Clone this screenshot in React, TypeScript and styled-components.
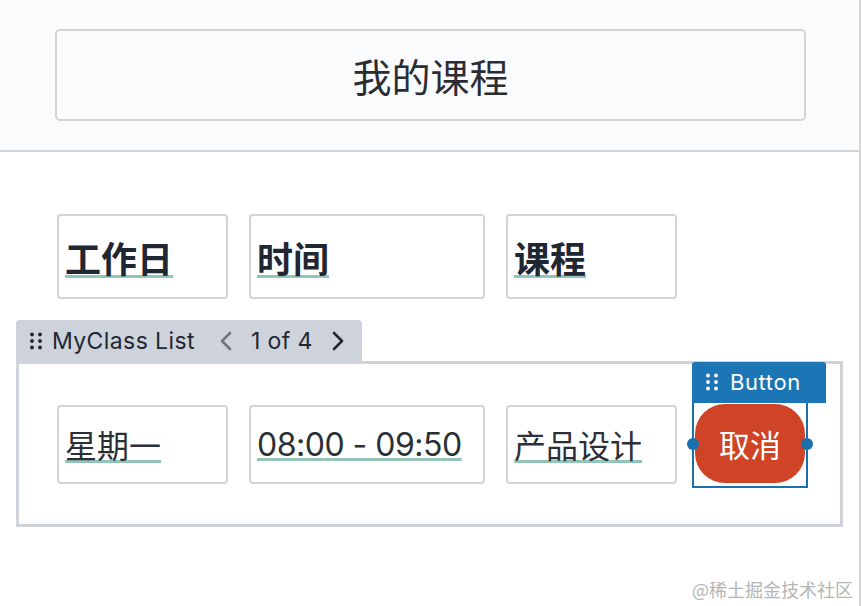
import React from "react";
import styled, { createGlobalStyle } from "styled-components";

const Global = createGlobalStyle`
  html, body { margin: 0; padding: 0; background: #ffffff; }
  body { font-family: Inter, "Noto Sans CJK SC", sans-serif; }
`;

const Page = styled.div`
  position: relative;
  width: 859px;
  height: 606px;
  border-right: 2px solid #d5d6db;
  background: #ffffff;
  overflow: hidden;
`;

const Header = styled.header`
  height: 152px;
  box-sizing: border-box;
  padding: 29px 53px 0 55px;
  background: #fafbfc;
  border-bottom: 2px solid #d3d4d9;
`;

const TitleBox = styled.div`
  height: 92px;
  box-sizing: border-box;
  border: 2px solid #d2d3d8;
  border-radius: 5px;
  display: flex;
  align-items: center;
  justify-content: center;
  font-family: "Noto Sans CJK SC", sans-serif;
  font-size: 39px;
  color: #2a2d34;
`;

const Main = styled.main`
  padding: 62px 0 0 16px;
`;

const HeadRow = styled.div`
  display: flex;
  gap: 21px;
  padding-left: 41px;
`;

const Cell = styled.div<{ $w: number; $h: number }>`
  width: ${(p) => p.$w}px;
  height: ${(p) => p.$h}px;
  box-sizing: border-box;
  border: 2px solid #d4d4d8;
  border-radius: 4px;
  background: #ffffff;
  display: flex;
  align-items: center;
  padding-left: 6px;
`;

const Label = styled.span<{ $bold?: boolean; $tight?: boolean }>`
  font-family: Inter, "Noto Sans CJK SC", sans-serif;
  font-size: ${(p) => (p.$bold ? 36 : 32)}px;
  font-weight: ${(p) => (p.$bold ? 700 : 400)};
  color: ${(p) => (p.$bold ? "#1f2733" : "#2b2f36")};
  letter-spacing: ${(p) => (p.$tight ? "-0.5px" : "0")};
  white-space: nowrap;
  text-decoration: underline;
  text-decoration-color: #93c4b8;
  text-decoration-thickness: 3px;
  text-underline-offset: 2px;
`;

const Tab = styled.div`
  margin-top: 21px;
  width: 346px;
  height: 41px;
  box-sizing: border-box;
  background: #ced3db;
  border-radius: 4px 4px 0 0;
  display: flex;
  align-items: center;
  padding-left: 14px;
  font-family: Inter, sans-serif;
  font-size: 23px;
  letter-spacing: 0.4px;
  color: #1f2733;
`;

const TabTitle = styled.span`
  margin-left: 10px;
  margin-right: 25px;
`;

const Pager = styled.span`
  margin: 0 19px 0 19px;
`;

const Chevron = styled.svg<{ $muted?: boolean }>`
  width: 12px;
  height: 20px;
  stroke: ${(p) => (p.$muted ? "#6f7480" : "#1f2733")};
  fill: none;
  stroke-width: 2.6;
  stroke-linecap: round;
  stroke-linejoin: round;
`;

const Panel = styled.div`
  width: 827px;
  height: 166px;
  box-sizing: border-box;
  border: 3px solid #d0d4da;
  padding: 0 0 0 38px;
  display: flex;
  align-items: center;
  gap: 21px;
`;

const Selection = styled.div`
  position: relative;
  margin-left: -6px;
  border: 2px solid #1c6fad;
  padding: 1px 1px 3px 1px;
  display: flex;
`;

const SelLabel = styled.div`
  position: absolute;
  left: -2px;
  bottom: 100%;
  width: 134px;
  height: 41px;
  box-sizing: border-box;
  background: #1c76b6;
  border-radius: 3px 3px 0 0;
  display: flex;
  align-items: center;
  padding-left: 14px;
  font-family: Inter, sans-serif;
  font-size: 22px;
  letter-spacing: 0.6px;
  color: #ffffff;
`;

const SelText = styled.span`
  margin-left: 12px;
`;

const Handle = styled.span<{ $side: "l" | "r" }>`
  position: absolute;
  top: 50%;
  ${(p) => (p.$side === "l" ? "left: -7px;" : "right: -7px;")}
  width: 12px;
  height: 12px;
  margin-top: -6px;
  border-radius: 50%;
  background: #1c6fad;
`;

const RedButton = styled.button`
  width: 110px;
  height: 79px;
  border: none;
  border-radius: 30px;
  background: #cf4326;
  color: #ffffff;
  font-family: "Noto Sans CJK SC", sans-serif;
  font-size: 31px;
  padding: 0;
  cursor: pointer;
`;

const Watermark = styled.div`
  position: absolute;
  right: 6px;
  bottom: 4px;
  font-family: "Noto Sans CJK SC", sans-serif;
  font-size: 18px;
  color: #b5b5b5;
`;

const Grip = ({ color }: { color: string }) => (
  <svg width="12" height="18" viewBox="0 0 12 18">
    {[0, 1, 2].map((r) =>
      [0, 1].map((c) => (
        <circle key={`${r}-${c}`} cx={2 + c * 8} cy={2.5 + r * 6.5} r={1.9} fill={color} />
      ))
    )}
  </svg>
);

export default function App() {
  return (
    <Page>
      <Global />
      <Header>
        <TitleBox>我的课程</TitleBox>
      </Header>
      <Main>
        <HeadRow>
          <Cell $w={171} $h={85}>
            <Label $bold>工作日</Label>
          </Cell>
          <Cell $w={236} $h={85}>
            <Label $bold>时间</Label>
          </Cell>
          <Cell $w={171} $h={85}>
            <Label $bold>课程</Label>
          </Cell>
        </HeadRow>
        <Tab>
          <Grip color="#1f2733" />
          <TabTitle>MyClass List</TabTitle>
          <Chevron $muted viewBox="0 0 12 20">
            <polyline points="10,2 2,10 10,18" />
          </Chevron>
          <Pager>1 of 4</Pager>
          <Chevron viewBox="0 0 12 20">
            <polyline points="2,2 10,10 2,18" />
          </Chevron>
        </Tab>
        <Panel>
          <Cell $w={171} $h={79}>
            <Label>星期一</Label>
          </Cell>
          <Cell $w={236} $h={79}>
            <Label $tight>08:00 - 09:50</Label>
          </Cell>
          <Cell $w={171} $h={79}>
            <Label>产品设计</Label>
          </Cell>
          <Selection>
            <SelLabel>
              <Grip color="#ffffff" />
              <SelText>Button</SelText>
            </SelLabel>
            <Handle $side="l" />
            <Handle $side="r" />
            <RedButton>取消</RedButton>
          </Selection>
        </Panel>
      </Main>
      <Watermark>@稀土掘金技术社区</Watermark>
    </Page>
  );
}
